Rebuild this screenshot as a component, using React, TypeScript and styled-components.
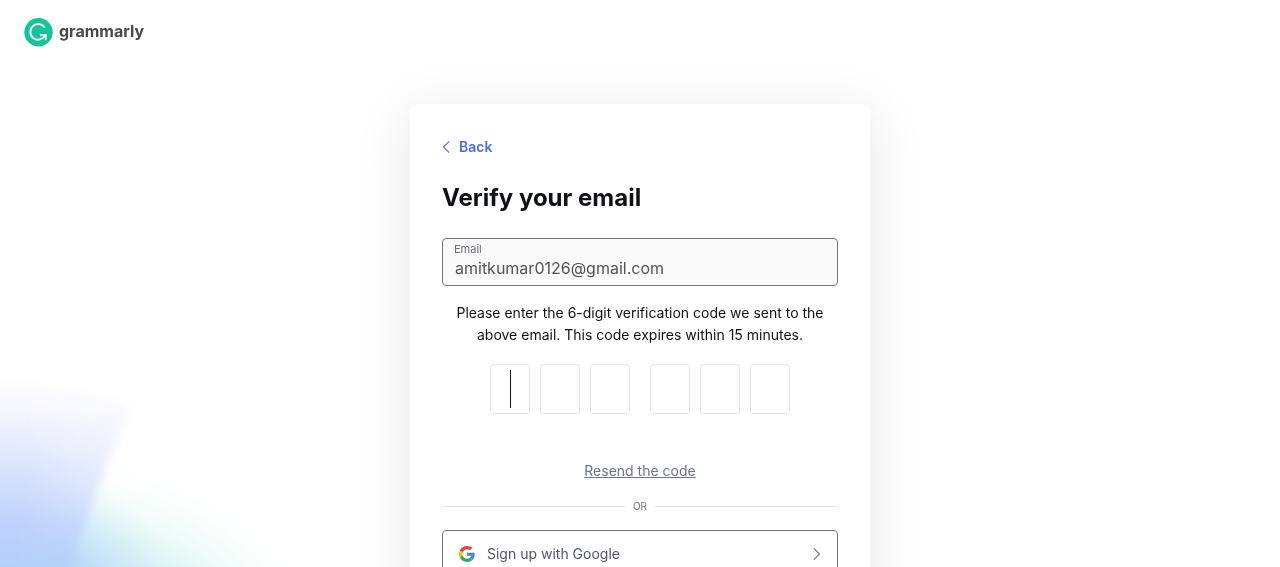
import React from "react";
import styled, { createGlobalStyle } from "styled-components";

const GlobalStyle = createGlobalStyle`
  *, *::before, *::after { box-sizing: border-box; }
  body {
    margin: 0;
    background: #fff;
    color: #0e101a;
    font-family: Inter, "Liberation Sans", sans-serif;
    font-size: 14px;
    line-height: 22px;
  }
`;

const Page = styled.div`
  position: relative;
  z-index: 0;
  min-height: 100vh;
`;

const Glow = styled.svg`
  position: fixed;
  left: 0;
  bottom: 0;
  z-index: -1;
  width: 420px;
  height: 217px;
`;

const Header = styled.header`
  display: flex;
  align-items: center;
  height: 64px;
  padding: 0 24px;
`;

const Logo = styled.a`
  display: flex;
  align-items: center;
  gap: 6px;
  color: #4a4a4a;
  text-decoration: none;
`;

const Wordmark = styled.span`
  padding-bottom: 2px;
  font-family: Inter, sans-serif;
  font-size: 16px;
  line-height: 24px;
  font-weight: 700;
`;

const Main = styled.main`
  display: flex;
  justify-content: center;
  padding: 40px 16px;
`;

const Card = styled.section`
  display: flex;
  flex-direction: column;
  width: 100%;
  max-width: 460px;
  padding: 32px;
  border-radius: 8px;
  background: #fff;
  box-shadow: 0 10px 60px rgba(0, 0, 0, 0.1);
`;

const BackButton = styled.button`
  display: flex;
  align-items: center;
  align-self: flex-start;
  gap: 8px;
  padding: 0;
  border: 0;
  background: none;
  color: #4a6ee0;
  font: inherit;
  font-weight: 600;
`;

const Title = styled.h1`
  margin: 24px 0;
  font-size: 24px;
  line-height: 32px;
  font-weight: 700;
`;

const Field = styled.label`
  display: flex;
  flex-direction: column;
  height: 48px;
  padding: 3px 11px;
  border: 1px solid #6d758d;
  border-radius: 4px;
  background: #fafafa;
`;

const FieldLabel = styled.span`
  color: #646b81;
  font-size: 11px;
  line-height: 15px;
`;

const EmailInput = styled.input`
  width: 100%;
  height: 22px;
  padding: 0 1px;
  border: 0;
  outline: 0;
  background: none;
  color: #545454;
  font: inherit;
  font-size: 16px;
  line-height: 22px;
`;

const Hint = styled.p`
  margin: 16px 0;
  text-align: center;
`;

const CodeRow = styled.div`
  display: flex;
  justify-content: center;
  gap: 20px;
  margin-top: 2px;
`;

const CodeGroup = styled.div`
  display: flex;
  gap: 10px;
`;

const Slot = styled.div<{ $active?: boolean }>`
  position: relative;
  width: 40px;
  height: 50px;

  &::after {
    content: "";
    display: ${(p) => (p.$active ? "block" : "none")};
    position: absolute;
    top: 6px;
    bottom: 6px;
    left: 50%;
    width: 1px;
    background: #0e101a;
  }
`;

const DigitInput = styled.input`
  width: 100%;
  height: 100%;
  padding: 0;
  border: 1px solid #e5e4f2;
  border-radius: 3px;
  outline: 0;
  background: #fff;
  font: inherit;
  font-size: 32px;
  text-align: center;
  caret-color: transparent;
`;

const Resend = styled.a`
  align-self: center;
  margin-top: 46px;
  color: #6d758d;
  text-underline-offset: 1px;
`;

const Divider = styled.div`
  display: flex;
  align-items: center;
  gap: 8px;
  margin: 16px 0;
  color: #6d758d;
  font-size: 10px;
  line-height: 16px;

  &::before,
  &::after {
    content: "";
    flex: 1;
    height: 1px;
    background: #e5e4f2;
  }
`;

const ProviderButton = styled.button`
  display: flex;
  align-items: center;
  gap: 12px;
  height: 48px;
  padding: 0 16px;
  border: 1px solid #6d758d;
  border-radius: 4px;
  background: #fff;
  color: #505672;
  font: inherit;
  text-align: left;
`;

const ProviderName = styled.span`
  flex: 1;
`;

const LogoMark = () => (
  <svg width="29" height="29" viewBox="0 0 29 29" aria-hidden="true">
    <circle cx="14.5" cy="14.2" r="14.2" fill="#15c39a" />
    <path
      d="M20.8 9.9A7.8 7.8 0 1 0 21.2 17.2M16 16.9H21.7V22.2"
      fill="none"
      stroke="#fff"
      strokeWidth="1.8"
    />
  </svg>
);

const Chevron = ({ left }: { left?: boolean }) => (
  <svg width="9" height="14" viewBox="0 0 9 14" aria-hidden="true">
    <path
      d={left ? "M7.2 1.4L1.4 7L7.2 12.6" : "M1.8 1.4L7.6 7L1.8 12.6"}
      fill="none"
      stroke={left ? "#4a6ee0" : "#6d758d"}
      strokeWidth="1.1"
    />
  </svg>
);

const GoogleMark = () => (
  <svg width="16" height="16" viewBox="0 0 48 48" aria-hidden="true">
    <path fill="#EA4335" d="M24 9.5c3.54 0 6.71 1.22 9.21 3.6l6.85-6.85C35.9 2.38 30.47 0 24 0 14.62 0 6.51 5.38 2.56 13.22l7.98 6.19C12.43 13.72 17.74 9.5 24 9.5z" />
    <path fill="#4285F4" d="M46.98 24.55c0-1.57-.15-3.09-.38-4.55H24v9.02h12.94c-.58 2.96-2.26 5.48-4.78 7.18l7.73 6c4.51-4.18 7.09-10.36 7.09-17.65z" />
    <path fill="#FBBC05" d="M10.53 28.59c-.48-1.45-.76-2.99-.76-4.59s.27-3.14.76-4.59l-7.98-6.19C.92 16.46 0 20.12 0 24c0 3.88.92 7.54 2.56 10.78l7.97-6.19z" />
    <path fill="#34A853" d="M24 48c6.48 0 11.93-2.13 15.89-5.81l-7.73-6c-2.15 1.45-4.92 2.3-8.16 2.3-6.26 0-11.57-4.22-13.47-9.91l-7.98 6.19C6.51 42.62 14.62 48 24 48z" />
  </svg>
);

const CornerGlow = () => (
  <Glow viewBox="0 0 420 217" aria-hidden="true">
    <defs>
      <linearGradient id="blue" x1="0" y1="24" x2="0" y2="217" gradientUnits="userSpaceOnUse">
        <stop offset="0" stopColor="#f5f4ff" stopOpacity="0" />
        <stop offset="0.2" stopColor="#f3f4fe" stopOpacity="0.9" />
        <stop offset="0.5" stopColor="#d8e2fd" />
        <stop offset="0.78" stopColor="#bfd1fc" />
        <stop offset="1" stopColor="#b3cff8" />
      </linearGradient>
      <linearGradient id="fade" x1="0" y1="0" x2="140" y2="0" gradientUnits="userSpaceOnUse">
        <stop offset="0.15" stopColor="#fff" />
        <stop offset="0.6" stopColor="#fff" stopOpacity="0.7" />
        <stop offset="1" stopColor="#fff" stopOpacity="0.6" />
      </linearGradient>
      <mask id="wedge" maskUnits="userSpaceOnUse" x="-20" y="0" width="200" height="260">
        <path
          d="M-20 28Q70 30 132 58C114 88 103 126 90 160Q80 195 62 240H-20Z"
          fill="url(#fade)"
          filter="url(#edge)"
        />
      </mask>
      <radialGradient id="mint" cx="0" cy="0" r="1" gradientUnits="userSpaceOnUse" gradientTransform="translate(120 256) rotate(20) scale(220 136)">
        <stop offset="0" stopColor="#cdeef2" />
        <stop offset="0.3" stopColor="#d6f0f5" />
        <stop offset="0.55" stopColor="#e6f9f5" stopOpacity="0.9" />
        <stop offset="0.8" stopColor="#f2fdfa" stopOpacity="0.6" />
        <stop offset="1" stopColor="#f9fffd" stopOpacity="0" />
      </radialGradient>
      <radialGradient id="sky" cx="0" cy="0" r="1" gradientUnits="userSpaceOnUse" gradientTransform="translate(60 230) scale(110 100)">
        <stop offset="0" stopColor="#b0d3f8" />
        <stop offset="0.3" stopColor="#bbdcf8" stopOpacity="0.9" />
        <stop offset="1" stopColor="#d8ecfb" stopOpacity="0" />
      </radialGradient>
      <filter id="edge" x="-20%" y="-20%" width="140%" height="140%">
        <feGaussianBlur stdDeviation="5" />
      </filter>
    </defs>
    <rect width="420" height="217" fill="url(#mint)" />
    <rect width="420" height="217" fill="url(#sky)" />
    <rect width="180" height="217" fill="url(#blue)" mask="url(#wedge)" />
  </Glow>
);

const groups = [
  [1, 2, 3],
  [4, 5, 6],
];

export default function App() {
  return (
    <>
      <GlobalStyle />
      <Page>
        <CornerGlow />
        <Header>
          <Logo href="#">
            <LogoMark />
            <Wordmark>grammarly</Wordmark>
          </Logo>
        </Header>
        <Main>
          <Card>
            <BackButton type="button">
              <Chevron left />
              Back
            </BackButton>
            <Title>Verify your email</Title>
            <Field>
              <FieldLabel>Email</FieldLabel>
              <EmailInput type="email" value="amitkumar0126@gmail.com" readOnly />
            </Field>
            <Hint>
              Please enter the 6-digit verification code we sent to the above
              email. This code expires within 15 minutes.
            </Hint>
            <CodeRow>
              {groups.map((digits) => (
                <CodeGroup key={digits[0]}>
                  {digits.map((n) => (
                    <Slot key={n} $active={n === 1}>
                      <DigitInput aria-label={`Digit ${n}`} inputMode="numeric" maxLength={1} />
                    </Slot>
                  ))}
                </CodeGroup>
              ))}
            </CodeRow>
            <Resend href="#">Resend the code</Resend>
            <Divider>OR</Divider>
            <ProviderButton type="button">
              <GoogleMark />
              <ProviderName>Sign up with Google</ProviderName>
              <Chevron />
            </ProviderButton>
          </Card>
        </Main>
      </Page>
    </>
  );
}
